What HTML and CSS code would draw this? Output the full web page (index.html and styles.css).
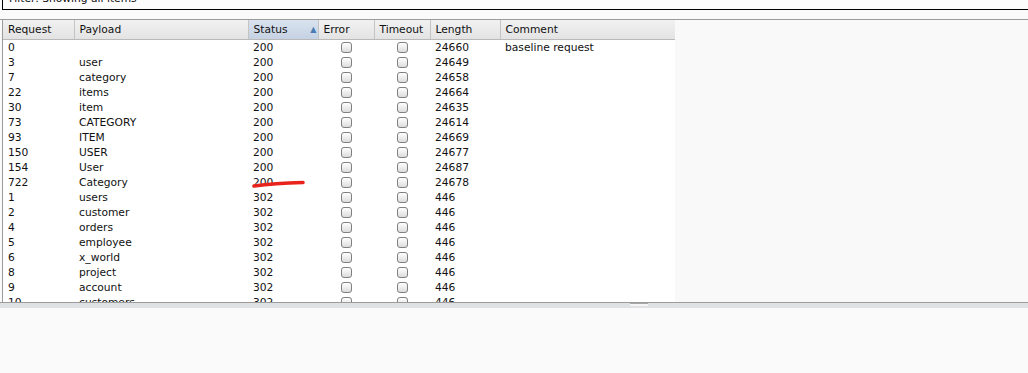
FILE: index.html
```html
<!DOCTYPE html>
<html lang="en">
<head>
    <meta charset="UTF-8">
    <title>Intruder results</title>
    <link rel="stylesheet" href="styles.css">
</head>
<body>
    <div class="filter"><span>Filter: Showing all items</span></div>

    <div class="pane">
        <div class="results">
            <table>
                <colgroup>
                    <col class="c-req">
                    <col class="c-pay">
                    <col class="c-status">
                    <col class="c-err">
                    <col class="c-time">
                    <col class="c-len">
                    <col class="c-com">
                </colgroup>
                <thead>
                    <tr>
                        <th>Request</th>
                        <th>Payload</th>
                        <th class="sorted">Status <span class="arrow">&#9650;</span></th>
                        <th>Error</th>
                        <th>Timeout</th>
                        <th>Length</th>
                        <th>Comment</th>
                    </tr>
                </thead>
                <tbody id="rows"></tbody>
            </table>
            <svg class="mark" width="60" height="12" viewBox="0 0 60 12">
                <path d="M3 8 C 18 6, 35 5, 52 4.5" stroke="#e8231b" stroke-width="3.6" fill="none" stroke-linecap="round"/>
            </svg>
        </div>
        <div class="empty"></div>
    </div>

    <div class="divider"><span class="grip"></span></div>
    <div class="bottom"></div>

    <script>
        const data = [
            ['0', '', '200', '24660', 'baseline request'],
            ['3', 'user', '200', '24649', ''],
            ['7', 'category', '200', '24658', ''],
            ['22', 'items', '200', '24664', ''],
            ['30', 'item', '200', '24635', ''],
            ['73', 'CATEGORY', '200', '24614', ''],
            ['93', 'ITEM', '200', '24669', ''],
            ['150', 'USER', '200', '24677', ''],
            ['154', 'User', '200', '24687', ''],
            ['722', 'Category', '200', '24678', ''],
            ['1', 'users', '302', '446', ''],
            ['2', 'customer', '302', '446', ''],
            ['4', 'orders', '302', '446', ''],
            ['5', 'employee', '302', '446', ''],
            ['6', 'x_world', '302', '446', ''],
            ['8', 'project', '302', '446', ''],
            ['9', 'account', '302', '446', ''],
            ['10', 'customers', '302', '446', '']
        ];

        const tbody = document.getElementById('rows');
        data.forEach(row => {
            const tr = document.createElement('tr');
            tr.innerHTML = `
                <td>${row[0]}</td>
                <td>${row[1]}</td>
                <td>${row[2]}</td>
                <td class="box"><span class="check"></span></td>
                <td class="box"><span class="check"></span></td>
                <td>${row[3]}</td>
                <td>${row[4]}</td>
            `;
            tbody.appendChild(tr);
        });
    </script>
</body>
</html>
```

FILE: styles.css
```css
body {
    margin: 0;
    background: #fafafa;
    font-family: 'DejaVu Sans', sans-serif;
    font-size: 10.7px;
    color: #111;
}
.filter {
    height: 9px;
    margin-left: 2px;
    border-left: 1px solid #000;
    border-bottom: 1px solid #000;
    background: #fcfcfc;
    overflow: hidden;
}
.filter span {
    display: block;
    margin-top: -8px;
    padding-left: 6px;
    line-height: 14px;
}
.pane {
    margin-top: 9px;
    border-top: 1px solid #9b9b9b;
    display: flex;
    height: 282px;
    overflow: hidden;
}
.results {
    position: relative;
    width: 672px;
    margin-left: 2px;
    border-left: 1px solid #9b9b9b;
    background: #fff;
    overflow: hidden;
}
.empty {
    flex: 1;
    background: #f9f9fa;
}
table {
    border-collapse: collapse;
    table-layout: fixed;
    width: 672px;
}
.c-req { width: 71px; }
.c-pay { width: 174px; }
.c-status { width: 70px; }
.c-err { width: 56px; }
.c-time { width: 56px; }
.c-len { width: 70px; }
.c-com { width: 175px; }
th {
    box-sizing: border-box;
    height: 19px;
    padding: 0 0 0 5px;
    line-height: 19px;
    vertical-align: top;
    text-align: left;
    font-weight: normal;
    background: linear-gradient(#f1f1f1, #e3e3e3);
    border-bottom: 1px solid #b9b9b9;
    border-right: 1px solid #c4c4c4;
    white-space: nowrap;
    overflow: hidden;
}
th.sorted {
    background: linear-gradient(#d9e2ee, #c5d2e3);
}
th .arrow {
    float: right;
    margin-right: 1px;
    font-size: 8px;
    line-height: 19px;
    color: #4a7bb3;
}
td {
    height: 15px;
    padding: 0 0 0 5px;
    line-height: 15px;
    white-space: nowrap;
    overflow: hidden;
}
td.box {
    padding: 0;
    text-align: center;
}
.check {
    display: inline-block;
    width: 9px;
    height: 9px;
    margin-top: 2px;
    vertical-align: top;
    border: 1px solid #808080;
    border-radius: 3px;
    background: linear-gradient(#ffffff, #dcdcdc);
}
.mark {
    position: absolute;
    left: 248px;
    top: 158px;
}
.divider {
    height: 5px;
    border-top: 1px solid #9b9b9b;
    background: #e0e1e4;
    position: relative;
}
.grip {
    position: absolute;
    left: 630px;
    top: 0;
    width: 18px;
    height: 2px;
    border-top: 1px solid #a8a8a8;
    background: #f4f4f4;
}
.bottom {
    height: 70px;
    background: #fafafa;
}
```
